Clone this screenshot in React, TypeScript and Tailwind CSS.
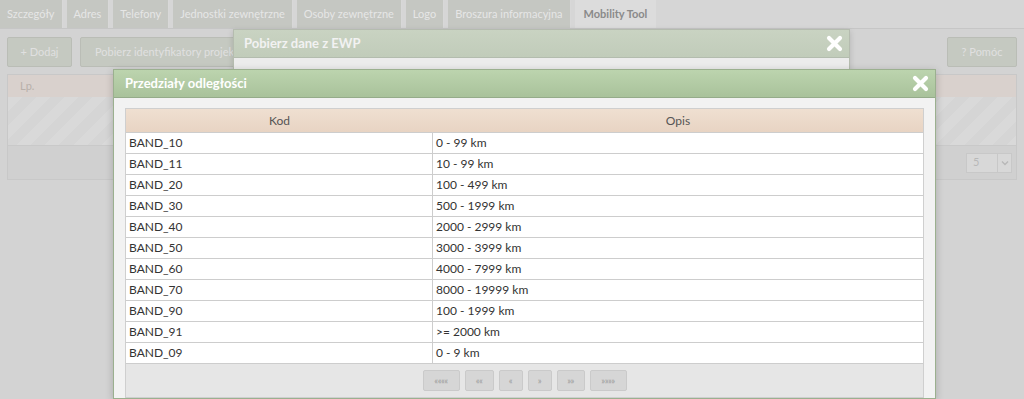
import React from "react";

const tabs = [
  "Szczegóły",
  "Adres",
  "Telefony",
  "Jednostki zewnętrzne",
  "Osoby zewnętrzne",
  "Logo",
  "Broszura informacyjna",
];

const bands: [string, string][] = [
  ["BAND_10", "0 - 99 km"],
  ["BAND_11", "10 - 99 km"],
  ["BAND_20", "100 - 499 km"],
  ["BAND_30", "500 - 1999 km"],
  ["BAND_40", "2000 - 2999 km"],
  ["BAND_50", "3000 - 3999 km"],
  ["BAND_60", "4000 - 7999 km"],
  ["BAND_70", "8000 - 19999 km"],
  ["BAND_90", "100 - 1999 km"],
  ["BAND_91", ">= 2000 km"],
  ["BAND_09", "0 - 9 km"],
];

const pager = [
  { label: "««««", w: "w-[37px]" },
  { label: "««", w: "w-[29px]" },
  { label: "«", w: "w-[24px]" },
  { label: "»", w: "w-[24px]" },
  { label: "»»", w: "w-[28px]" },
  { label: "»»»»", w: "w-[37px]" },
];

const CloseX = () => (
  <svg width="17" height="17" viewBox="0 0 17 17">
    <path
      d="M3 3 L14 14 M14 3 L3 14"
      stroke="#ffffff"
      strokeWidth="4.2"
      strokeLinecap="round"
    />
  </svg>
);

export default function App() {
  return (
    <div className="relative w-[1024px] h-[399px] overflow-hidden bg-[#d3d3d3] font-['Lato',sans-serif]">
      {/* Underlying page (dimmed by modal overlay) */}
      <div className="flex h-[29px] border-b border-[#c6c6c6] bg-[#d6d6d6]">
        {tabs.map((t) => (
          <div
            key={t}
            className="mr-[4px] flex items-center px-[7px] text-[11px] text-[#e6e6e6] bg-[#c5c7c2] border-r border-[#d8d8d8]"
          >
            {t}
          </div>
        ))}
        <div className="flex items-center px-[9px] text-[11px] font-bold text-[#8a8a8a] bg-[#dcdcdc]">
          Mobility Tool
        </div>
      </div>

      <div className="flex justify-between px-[7px] pt-[8px]">
        <div className="flex gap-[8px]">
          <div className="flex h-[30px] w-[65px] items-center justify-center rounded-[2px] border border-[#babdb6] bg-[#c5c9c1] text-[11px] text-[#e0e0e0]">
            + Dodaj
          </div>
          <div className="flex h-[30px] items-center rounded-[2px] border border-[#babdb6] bg-[#c5c9c1] px-[14px] text-[11px] text-[#e0e0e0]">
            Pobierz identyfikatory projektów
          </div>
        </div>
        <div className="flex h-[30px] w-[70px] items-center justify-center rounded-[2px] border border-[#babdb6] bg-[#c5c9c1] text-[11px] text-[#e0e0e0]">
          ? Pomóc
        </div>
      </div>

      <div className="mx-[7px] mt-[7px] h-[106px] border border-[#c8c8c8] bg-[#d0d0d0]">
        <div className="flex h-[22px] items-center bg-[#d9d1cd] px-[12px] text-[11px] text-[#b8b0aa]">
          Lp.
        </div>
        <div className="h-[48px] bg-[repeating-linear-gradient(135deg,#d9d9d9_0px,#d9d9d9_10px,#d5d5d5_10px,#d5d5d5_20px)]" />
        <div className="flex h-[34px] items-center justify-end border-t border-[#c9c9c9] px-[4px]">
          <div className="flex h-[20px] w-[46px] items-center border border-[#c8c8c8] bg-[#d8d8d8]">
            <span className="flex-1 pl-[6px] text-[11px] text-[#b8b8b8]">5</span>
            <span className="flex h-full w-[14px] items-center justify-center border-l border-[#c8c8c8]">
              <svg width="8" height="6" viewBox="0 0 8 6">
                <path d="M1 1.5 L4 4.5 L7 1.5" stroke="#b8b8b8" strokeWidth="1.4" fill="none" />
              </svg>
            </span>
          </div>
        </div>
      </div>

      {/* Dialog: Pobierz dane z EWP */}
      <div className="absolute left-[233px] top-[29px] w-[617px] border border-[#b5bcaf] bg-[#e9e9e9] shadow-[0_2px_6px_rgba(0,0,0,0.15)]">
        <div className="flex h-[28px] items-center justify-between border-b border-[#b3bcae] bg-gradient-to-b from-[#c9d3c2] to-[#c1ccba] pl-[10px] pr-[6px]">
          <span className="text-[13px] font-bold text-[#f2f2f2]">Pobierz dane z EWP</span>
          <CloseX />
        </div>
        <div className="h-[12px] bg-[#ececec]" />
      </div>

      {/* Dialog: Przedziały odległości */}
      <div className="absolute left-[113px] top-[69px] w-[823px] border border-[#9bb08f] bg-[#f2f2f2] shadow-[0_2px_8px_rgba(0,0,0,0.2)]">
        <div className="flex h-[28px] items-center justify-between border-b border-[#95ab8a] bg-gradient-to-b from-[#bcd4ae] to-[#a9c29b] pl-[11px] pr-[6px]">
          <span className="text-[13px] font-bold text-white">Przedziały odległości</span>
          <CloseX />
        </div>
        <div className="px-[11px] pt-[10px]">
          <div className="border border-[#cfcfcf] bg-white">
            <div className="grid h-[23px] grid-cols-[307px_1fr] items-center bg-gradient-to-b from-[#efdfd1] to-[#e8d4c3] text-[12px] text-[#555]">
              <div className="text-center">Kod</div>
              <div className="text-center">Opis</div>
            </div>
            {bands.map(([kod, opis]) => (
              <div
                key={kod}
                className="grid h-[21px] grid-cols-[307px_1fr] items-center border-t border-[#cdcdcd] text-[12px] text-[#333]"
              >
                <div className="flex h-full items-center border-r border-[#cdcdcd] pl-[3px]">{kod}</div>
                <div className="pl-[3px]">{opis}</div>
              </div>
            ))}
            <div className="flex h-[34px] items-center justify-center gap-[5px] border-t border-[#cdcdcd] bg-[#e6e6e6]">
              {pager.map((p) => (
                <div
                  key={p.label}
                  className={`${p.w} flex h-[21px] items-center justify-center rounded-[2px] border border-[#cacaca] bg-[#d6d6d6] text-[9px] tracking-[-0.5px] text-[#9a9a9a]`}
                >
                  {p.label}
                </div>
              ))}
            </div>
          </div>
        </div>
      </div>
    </div>
  );
}
